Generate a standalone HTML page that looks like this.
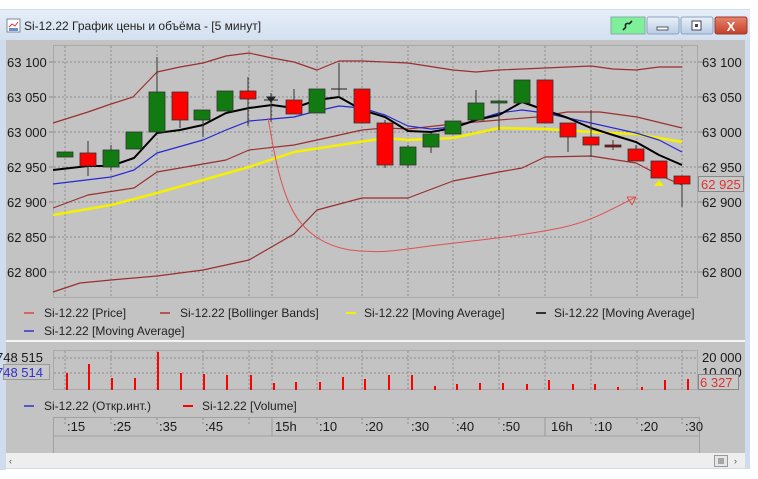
<!DOCTYPE html>
<html><head><meta charset="utf-8"><style>
html,body{margin:0;padding:0;background:#fff;}
svg{display:block;font-family:"Liberation Sans","DejaVu Sans",sans-serif;}
</style></head><body>
<svg width="758" height="479" viewBox="0 0 758 479" xmlns="http://www.w3.org/2000/svg">
<defs>
<linearGradient id="tb" x1="0" y1="0" x2="0" y2="1"><stop offset="0" stop-color="#e6eef8"/><stop offset="1" stop-color="#d3e0ef"/></linearGradient>
<linearGradient id="bt" x1="0" y1="0" x2="0" y2="1"><stop offset="0" stop-color="#eaf1f9"/><stop offset="1" stop-color="#b9cde4"/></linearGradient>
<linearGradient id="cl" x1="0" y1="0" x2="0" y2="1"><stop offset="0" stop-color="#e7836c"/><stop offset="1" stop-color="#c2402a"/></linearGradient>
</defs>
<rect width="758" height="479" fill="#fff"/>
<rect x="0" y="9" width="750" height="460" fill="#cfdcec"/>
<rect x="0" y="10" width="750" height="30" fill="url(#tb)"/>
<rect x="6" y="40" width="739" height="413" fill="#c3c3c3"/>
<rect x="7" y="19" width="13" height="13" fill="#fff" stroke="#7a8aa0"/>
<path d="M9 27 l3-3 3 2 3-4" stroke="#d33" fill="none"/>
<rect x="9" y="28" width="9" height="3" fill="#6a8fc8"/>
<text x="24" y="30" font-size="12" fill="#222">Si-12.22 График цены и объёма - [5 минут]</text>
<rect x="611" y="17" width="34" height="17" fill="#7ff09a" stroke="#8aa" />
<path d="M623 30 l3-3 M626 27 a2 2 0 1 1 3-3 M629 24 l3-3" stroke="#222" stroke-width="1.6" fill="none"/>
<rect x="647" y="17" width="32" height="17" rx="2" fill="url(#bt)" stroke="#8da2bd"/>
<rect x="657" y="27" width="11" height="3" fill="#fff" stroke="#556"/>
<rect x="681" y="17" width="32" height="17" rx="2" fill="url(#bt)" stroke="#8da2bd"/>
<rect x="692" y="21" width="9" height="9" fill="#fff" stroke="#445"/>
<rect x="695" y="24" width="3" height="3" fill="#445"/>
<rect x="715" y="17" width="32" height="17" rx="2" fill="url(#cl)" stroke="#9a3a2a"/>
<text x="731" y="31" font-size="13" font-weight="bold" fill="#fff" text-anchor="middle">X</text>

<rect x="53.5" y="45.5" width="644" height="252" fill="#c3c3c3" stroke="#a8a8a8"/>
<g stroke="#8c8c8c" stroke-dasharray="2,2" stroke-width="1">
<path d="M54 62H697M54 97H697M54 132H697M54 167H697M54 202H697M54 237H697M54 272H697"/>
<path d="M65 46V297M111 46V297M157 46V297M203 46V297M249 46V297M272 46V297M317 46V297M362 46V297M408 46V297M453 46V297M499 46V297M545 46V297M591 46V297M637 46V297M682 46V297"/>
</g>
<g stroke="#888">
<path d="M49 62H53M49 97H53M49 132H53M49 167H53M49 202H53M49 237H53M49 272H53M698 62H702M698 97H702M698 132H702M698 167H702M698 202H702M698 237H702M698 272H702"/>
</g>
<g font-size="13" fill="#1a1a1a">
<text x="7" y="67">63 100</text><text x="7" y="102">63 050</text><text x="7" y="137">63 000</text><text x="7" y="172">62 950</text><text x="7" y="207">62 900</text><text x="7" y="242">62 850</text><text x="7" y="277">62 800</text>
<text x="702" y="67">63 100</text><text x="702" y="102">63 050</text><text x="702" y="137">63 000</text><text x="702" y="172">62 950</text><text x="702" y="207">62 900</text><text x="702" y="242">62 850</text><text x="702" y="277">62 800</text>
</g>
<rect x="698.5" y="176.5" width="45" height="15" fill="#c8c8c8" stroke="#888"/>
<text x="701" y="189" font-size="13" fill="#e03030">62 925</text>

<g fill="none" stroke-linejoin="round">
<polyline stroke="#9a2f2f" stroke-width="1.2" points="53,123 88,112 111,104 133,97 157,72 180,67 203,63 226,56 249,53 272,58 294,62 317,70 339,61 362,61 385,62 408,63 453,70 476,72 499,70 545,68 591,66 613,69 636,70 659,67 682,67"/>
<polyline stroke="#9a2f2f" stroke-width="1.2" points="53,208 88,195 134,188 157,172 180,168 226,160 249,150 294,145 317,140 362,130 385,128 408,129 453,124 499,120 537,117 567,112 600,112 637,117 682,128"/>
<polyline stroke="#9a2f2f" stroke-width="1.2" points="53,292 80,283 111,280 157,276 203,270 249,260 294,234 317,210 362,198 385,198 408,198 453,181 499,172 522,168 545,157 591,156 636,163 659,175 682,185"/>
<polyline stroke="#f4f000" stroke-width="2.5" points="53,215 111,205 157,193 203,180 249,167 294,152 340,145 385,138 408,140 453,138 499,128 545,129 591,132 636,134 682,142"/>
<polyline stroke="#2828d0" stroke-width="1.2" points="53,184 111,177 134,170 157,153 203,140 226,130 249,121 272,119 294,117 317,111 339,106 362,108 385,115 408,126 431,129 453,127 476,120 499,113 522,110 545,113 591,123 636,133 659,140 682,152"/>
<polyline stroke="#000" stroke-width="2" points="53,170 88,166 111,166 134,158 157,133 180,130 203,125 226,113 249,108 272,105 294,108 317,100 339,97 362,110 385,117 408,131 431,132 453,128 476,120 499,115 522,102 545,110 568,118 591,128 613,135 636,142 659,155 682,165"/>
<path stroke="#e05050" stroke-width="1" d="M268 118 C272 140 278 180 290 205 C300 228 320 245 350 250 C380 254 400 250 430 246 C480 240 520 236 560 228 C590 222 610 210 636 197 M636 197 l-9 0 M636 197 l-4 8 M627 197 l5 8"/>
</g>
<g stroke="#333" stroke-width="1">
<path d="M88 141V176M111 145V170M157 57V132M180 92V128M203 110V137M248 77V126M271 93V122M294 89V114M339 63V97M431 133V153M476 90V120M499 100V130M568 123V152M591 110V157M613 140V150M636 145V161M682 176V207M385 120V168M408 145V168"/>
</g>
<g stroke="#333" stroke-width="0.8">
<rect x="57" y="152" width="16" height="5" fill="#117a11"/>
<rect x="80" y="153" width="16" height="13" fill="#f00"/>
<rect x="103" y="150" width="16" height="17" fill="#117a11"/>
<rect x="126" y="132" width="16" height="17" fill="#117a11"/>
<rect x="149" y="92" width="16" height="40" fill="#117a11"/>
<rect x="172" y="92" width="16" height="28" fill="#f00"/>
<rect x="194" y="110" width="16" height="10" fill="#117a11"/>
<rect x="217" y="91" width="16" height="20" fill="#117a11"/>
<rect x="240" y="91" width="16" height="8" fill="#f00"/>
<rect x="286" y="100" width="16" height="14" fill="#f00"/>
<rect x="309" y="89" width="16" height="24" fill="#117a11"/>
<rect x="354" y="89" width="16" height="34" fill="#f00"/>
<rect x="377" y="123" width="16" height="42" fill="#f00"/>
<rect x="400" y="147" width="16" height="18" fill="#117a11"/>
<rect x="423" y="134" width="16" height="13" fill="#117a11"/>
<rect x="445" y="121" width="16" height="13" fill="#117a11"/>
<rect x="468" y="103" width="16" height="17" fill="#117a11"/>
<rect x="491" y="101" width="16" height="2" fill="#117a11"/>
<rect x="514" y="80" width="16" height="23" fill="#117a11"/>
<rect x="537" y="80" width="16" height="43" fill="#f00"/>
<rect x="560" y="123" width="16" height="14" fill="#f00"/>
<rect x="583" y="137" width="16" height="8" fill="#f00"/>
<rect x="605" y="145" width="16" height="2" fill="#a00"/>
<rect x="628" y="149" width="16" height="12" fill="#f00"/>
<rect x="651" y="161" width="16" height="17" fill="#f00"/>
<rect x="674" y="176" width="16" height="8" fill="#f00"/>
</g>
<path d="M264 100H278M331 89H347M267 97h8l-4 5z" stroke="#222" fill="#222"/>
<path d="M659 180 l-5 6 h10z" fill="#f4f000"/>

<g font-size="12" fill="#222">
<path d="M24 313h10" stroke-width="1.5" stroke="#d44"/>
<path d="M160 313h10" stroke="#a33" stroke-width="1.5"/>
<path d="M346 313h10" stroke="#f4f000" stroke-width="2"/>
<path d="M536 313h10" stroke="#000" stroke-width="1.5"/>
<path d="M24 331h10" stroke="#33c" stroke-width="1.5"/>
<text x="44" y="317">Si-12.22 [Price]</text>
<text x="180" y="317">Si-12.22 [Bollinger Bands]</text>
<text x="364" y="317">Si-12.22 [Moving Average]</text>
<text x="554" y="317">Si-12.22 [Moving Average]</text>
<text x="44" y="335">Si-12.22 [Moving Average]</text>
</g>
<rect x="6" y="340" width="739" height="2" fill="#f4f4f4"/>

<rect x="53.5" y="350.5" width="644" height="39" fill="#c3c3c3" stroke="#a8a8a8"/>
<g stroke="#8c8c8c" stroke-dasharray="2,2"><path d="M54 358H697M54 373H697"/>
<path d="M65 351V389M111 351V389M157 351V389M203 351V389M249 351V389M272 351V389M317 351V389M362 351V389M408 351V389M453 351V389M499 351V389M545 351V389M591 351V389M637 351V389M682 351V389"/></g>
<g stroke="#f00" stroke-width="2">
<path d="M67 390V373M89 390V364M112 390V378M135 390V378M158 390V352M181 390V373M204 390V374M227 390V375M251 390V375M274 390V383M296 390V382M320 390V382M343 390V377M365 390V379M389 390V375M412 390V375M435 390V386M457 390V384M480 390V383M503 390V383M527 390V384M549 390V380M573 390V384M595 390V384M618 390V387M642 390V387M665 390V380M688 390V379"/>
</g>
<rect x="0" y="340" width="6" height="130" fill="#cfdcec"/>
<text x="-4" y="362" font-size="13" fill="#1a1a1a">748 515</text>
<rect x="3.5" y="364.5" width="46" height="15" fill="#c8c8c8" stroke="#999"/>
<text x="-4" y="377" font-size="13" fill="#3030d0">748 514</text>
<text x="702" y="362" font-size="13" fill="#1a1a1a">20 000</text>
<text x="702" y="377" font-size="13" fill="#1a1a1a">10 000</text>
<rect x="698.5" y="374.5" width="40" height="15" fill="#c8c8c8" stroke="#888"/>
<text x="700" y="387" font-size="13" fill="#e03030">6 327</text>
<g font-size="12" fill="#222">
<path d="M24 406h10" stroke="#33c" stroke-width="1.5"/>
<path d="M183 406h10" stroke="#f00" stroke-width="2"/>
<text x="44" y="410">Si-12.22 (Откр.инт.)</text>
<text x="202" y="410">Si-12.22 [Volume]</text>
</g>
<rect x="53.5" y="417.5" width="646" height="36" fill="#c3c3c3" stroke="#a0a0a0"/>
<path d="M54 436H699" stroke="#a0a0a0"/>
<g stroke="#8c8c8c" stroke-dasharray="2,2"><path d="M65 418V424M111 418V424M157 418V424M203 418V424M249 418V424M317 418V424M362 418V424M408 418V424M453 418V424M499 418V424M591 418V424M637 418V424M682 418V424"/></g>
<path d="M272 418V436M545 418V436" stroke="#999"/>
<g font-size="13" fill="#1a1a1a">
<text x="67" y="431">:15</text><text x="113" y="431">:25</text><text x="159" y="431">:35</text><text x="205" y="431">:45</text><text x="275" y="431">15h</text><text x="319" y="431">:10</text><text x="365" y="431">:20</text><text x="411" y="431">:30</text><text x="456" y="431">:40</text><text x="502" y="431">:50</text><text x="551" y="431">16h</text><text x="594" y="431">:10</text><text x="640" y="431">:20</text><text x="685" y="431">:30</text>
</g>
<rect x="6" y="453" width="739" height="15" fill="#eeeeee"/>
<text x="9" y="464" font-size="9" fill="#555">‹</text>
<rect x="714.5" y="455.5" width="13" height="11" fill="#e6e6e6" stroke="#999"/>
<path d="M719 458v6M721 458v6M723 458v6" stroke="#666"/>
<text x="734" y="464" font-size="9" fill="#555">›</text>
<rect x="745" y="40" width="5" height="429" fill="#cfdcec"/>
<rect x="752" y="40" width="6" height="439" fill="#fff"/>
</svg>
</body></html>
